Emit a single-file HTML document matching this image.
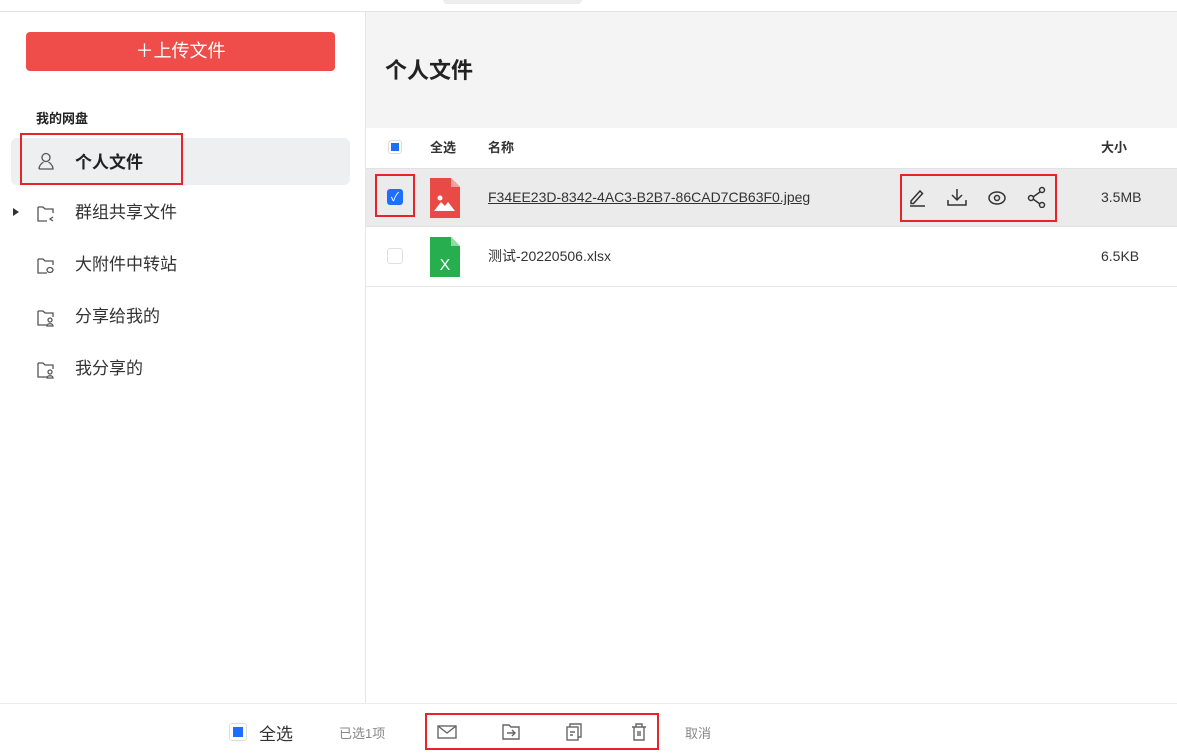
<!DOCTYPE html>
<html><head><meta charset="utf-8"><style>
*{margin:0;padding:0;box-sizing:border-box}
body{width:1177px;height:756px;overflow:hidden;background:#fff;font-family:"Liberation Sans","Noto Sans CJK SC",sans-serif;color:#333;position:relative}
.a{position:absolute}
.red{border:2px solid #e8242b}
svg{display:block}
</style></head><body>
<div class="a" style="left:0;top:0;width:1177px;height:12px;border-bottom:1px solid #e4e4e4"></div>
<div class="a" style="left:443px;top:0;width:139px;height:4px;background:#ededed;border-radius:0 0 5px 5px"></div>
<div class="a" style="left:365px;top:12px;width:1px;height:691px;background:#e6e6e6"></div>
<!-- sidebar -->
<div class="a" style="left:26px;top:32px;width:309px;height:39px;background:#ee4d4a;border-radius:4px;color:#fff;font-size:18px;text-align:center;line-height:39px">＋上传文件</div>
<div class="a" style="left:36px;top:108px;font-size:13px;font-weight:bold;color:#222">我的网盘</div>
<div class="a" style="left:11px;top:138px;width:339px;height:47px;background:#eeeff1;border-radius:6px"></div>
<div class="a red" style="left:20px;top:133px;width:163px;height:52px"></div>
<svg class="a" style="left:36px;top:151px" width="20" height="20" viewBox="0 0 20 20" fill="none" stroke="#555" stroke-width="1.3"><circle cx="10" cy="6.5" r="4"/><path d="M3 18h14c0-4-3-6-4.5-7M3 18c0-4 3-6 4.5-7"/></svg>
<div class="a" style="left:75px;top:148px;font-size:17px;font-weight:bold;color:#222">个人文件</div>
<div class="a" style="left:13px;top:208px;width:0;height:0;border-left:6px solid #333;border-top:4px solid transparent;border-bottom:4px solid transparent"></div>
<div class="a" style="left:75px;top:202px;font-size:17px;color:#333;line-height:22px">群组共享文件<br><span style="display:block;margin-top:30px">大附件中转站</span><span style="display:block;margin-top:30px">分享给我的</span><span style="display:block;margin-top:30px">我分享的</span></div>
<svg class="a" style="left:36px;top:204px" width="20" height="180" viewBox="0 0 20 180" fill="none" stroke="#555" stroke-width="1.3">
<path d="M2 3h5l2 2h8v4M2 3v14h9"/><path d="M17 13l-3 2 3 2"/>
<path d="M2 55h5l2 2h8v4M2 55v14h9"/><ellipse cx="14" cy="66" rx="3" ry="2.5"/>
<path d="M2 107h5l2 2h8v4M2 107v14h9"/><circle cx="14" cy="116" r="2"/><path d="M11 122c0-3 6-3 6 0z"/>
<path d="M2 159h5l2 2h8v4M2 159v14h9"/><circle cx="14" cy="168" r="2"/><path d="M11 174c0-3 6-3 6 0z"/>
</svg>
<!-- main -->
<div class="a" style="left:366px;top:12px;width:811px;height:116px;background:#f4f4f4"></div>
<div class="a" style="left:385px;top:53px;font-size:22px;font-weight:bold;color:#222">个人文件</div>
<div class="a" style="left:366px;top:128px;width:811px;height:40px;background:#fff"></div>
<div class="a" style="left:388px;top:140px;width:14px;height:14px;border:1px solid #ddd;border-radius:3px;background:#fff"><div style="margin:2px;width:8px;height:8px;background:#1e6fff"></div></div>
<div class="a" style="left:430px;top:137px;font-size:13px;font-weight:bold;color:#333">全选</div>
<div class="a" style="left:488px;top:137px;font-size:13px;font-weight:bold;color:#333">名称</div>
<div class="a" style="left:1101px;top:137px;font-size:13px;font-weight:bold;color:#333">大小</div>
<div class="a" style="left:366px;top:168px;width:811px;height:59px;background:#ebebeb;border-bottom:1px solid #e2e2e2;border-top:1px solid #e2e2e2"></div>
<div class="a" style="left:366px;top:286px;width:811px;height:1px;background:#eaeaea"></div>
<div class="a red" style="left:375px;top:174px;width:40px;height:43px"></div>
<div class="a" style="left:387px;top:189px;width:16px;height:16px;background:#1e6fff;border-radius:3px;color:#fff;font-size:12px;text-align:center;line-height:16px">✓</div>
<div class="a" style="left:387px;top:248px;width:16px;height:16px;border:1px solid #e0e0e0;border-radius:3px;background:#fff"></div>
<svg class="a" style="left:430px;top:178px" width="30" height="40" viewBox="0 0 30 40"><path d="M0 0h21l9 9v31H0z" fill="#ea4a45"/><path d="M21 0v9h9z" fill="#f6a19e"/><circle cx="10" cy="20" r="2.5" fill="#fff"/><path d="M4 33l7-9 4 4 3-4 7 9z" fill="#fff"/></svg>
<svg class="a" style="left:430px;top:237px" width="30" height="40" viewBox="0 0 30 40"><path d="M0 0h21l9 9v31H0z" fill="#27ae4f"/><path d="M21 0v9h9z" fill="#8fdba5"/><text x="15" y="33" fill="#fff" font-size="16" text-anchor="middle" font-family="Liberation Sans">X</text></svg>
<div class="a" style="left:488px;top:189px;font-size:14px;color:#333;text-decoration:underline">F34EE23D-8342-4AC3-B2B7-86CAD7CB63F0.jpeg</div>
<div class="a" style="left:488px;top:246px;font-size:14px;color:#333">测试-20220506.xlsx</div>
<div class="a" style="left:1101px;top:189px;font-size:14px;color:#333">3.5MB</div>
<div class="a" style="left:1101px;top:248px;font-size:14px;color:#333">6.5KB</div>
<div class="a red" style="left:900px;top:174px;width:157px;height:48px"></div>
<svg class="a" style="left:907px;top:186px" width="140" height="22" viewBox="0 0 140 22" fill="none" stroke="#333" stroke-width="1.5">
<path d="M4 15l9-10 2.5 2.5-9 10H4zM3 20h15"/>
<path d="M50 3v11M45 9l5 5 5-5M41 14v5h18v-5"/>
<ellipse cx="90" cy="12" rx="8" ry="6"/><circle cx="90" cy="12" r="2.5"/>
<circle cx="135" cy="4" r="2.5"/><circle cx="124" cy="12" r="2.5"/><circle cx="135" cy="19" r="2.5"/><path d="M126 11l7-5M126 13l7 5"/>
</svg>
<!-- bottom -->
<div class="a" style="left:0;top:703px;width:1177px;height:53px;background:#fff;border-top:1px solid #ececec"></div>
<div class="a" style="left:229px;top:723px;width:18px;height:18px;border:1px solid #ddd;border-radius:3px;background:#fff"><div style="margin:3px;width:10px;height:10px;background:#1e6fff"></div></div>
<div class="a" style="left:259px;top:720px;font-size:17px;color:#333">全选</div>
<div class="a" style="left:339px;top:723px;font-size:13px;color:#888">已选1项</div>
<div class="a" style="left:685px;top:723px;font-size:13px;color:#888">取消</div>
<div class="a red" style="left:425px;top:713px;width:234px;height:37px"></div>
<svg class="a" style="left:437px;top:722px" width="215" height="20" viewBox="0 0 215 20" fill="none" stroke="#666" stroke-width="1.4">
<rect x="1" y="4" width="18" height="12"/><path d="M1 4l9 7 9-7"/>
<path d="M66 3h6l2 2h8v12H66zM70 11h8M75 8l3 3-3 3"/>
<rect x="130" y="5" width="11" height="13"/><path d="M133 5V2h11v13h-3M133 10h5M133 13h3"/>
<path d="M195 5h14M199 5V2h6v3M197 5v13h10V5M201 9v5M203 9v5"/>
</svg>
</body></html>
